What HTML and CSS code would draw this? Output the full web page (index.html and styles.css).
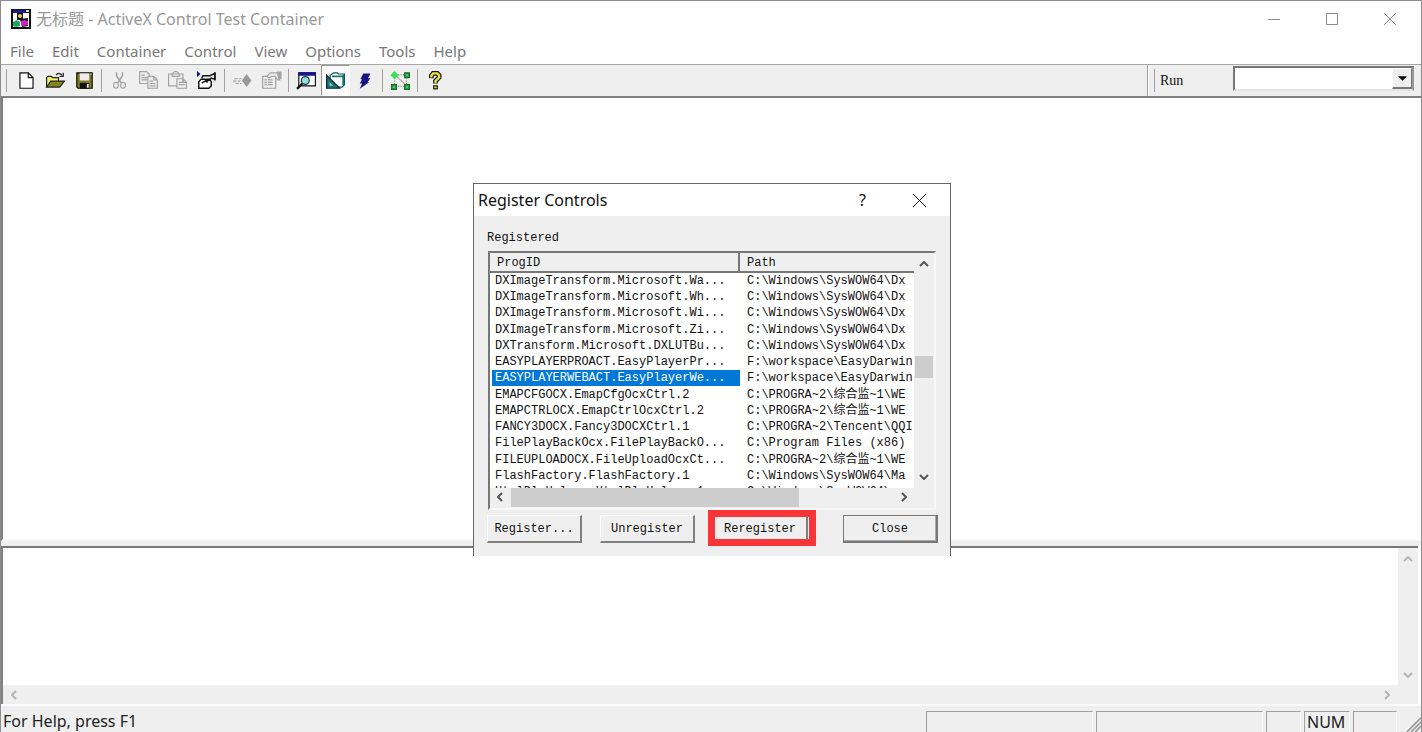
FILE: index.html
```html
<!DOCTYPE html>
<html lang="en">
<head>
<meta charset="utf-8">
<title>无标题 - ActiveX Control Test Container</title>
<link rel="stylesheet" href="styles.css">
</head>
<body>
<div class="window">
  <header class="titlebar">
    <svg class="app-icon" viewBox="0 0 20 20"><path fill="#111" d="M0 0h20v20H0z"/><path fill="#fff" d="M2 4h16v14H2z"/><path fill="#1c1c8c" d="M2 1h12v3H2z"/><path fill="#ddd" d="M15 1h3v2h-3z"/><path fill="#111" d="M6 4h6v7H6zM9 10l8-1v8l-6 1z"/><circle cx="9" cy="7" r="2" fill="#e3d64a"/><path fill="#19a866" d="M2 13l4-2 3 2v4l-4 1-3-1z"/><path fill="#d821c5" d="M10 12l3-1 4 1v4l-5 1-2-1z"/></svg>
    <h1 class="title">无标题 - ActiveX Control Test Container</h1>
    <div class="caption">
      <button class="cap" aria-label="Minimize"><svg viewBox="0 0 12 12"><path d="M0 6.500h12"/></svg></button>
      <button class="cap" aria-label="Maximize"><svg viewBox="0 0 12 12"><path d="M.5.5h11v11H.5z"/></svg></button>
      <button class="cap" aria-label="Close window"><svg viewBox="0 0 12 12"><path d="M0 0l12 12M12 0L0 12"/></svg></button>
    </div>
  </header>
  <nav class="menu">
    <button>File</button><button>Edit</button><button>Container</button><button>Control</button><button>View</button><button>Options</button><button>Tools</button><button>Help</button>
  </nav>
  <div class="toolbars">
    <div class="toolbar" role="toolbar">
      <span class="grip"></span>
      <button class="tool" aria-label="New"><svg viewBox="0 0 16 16"><path d="M2.500 1.500h7l4 4v9h-11z" fill="#fff" stroke="#111"/><path d="M9.500 1.500v4h4" fill="none" stroke="#111"/></svg></button>
      <button class="tool" aria-label="Open"><svg viewBox="0 0 16 16"><path d="M.5 13.500v-8l1-1h3l1 1h5v3" fill="#f5ef6a" stroke="#222"/><path d="M.5 13.500l3.500-5h11.500l-4 5z" fill="#85851c" stroke="#222"/><path d="M8.500 3.500q2-3 5 0M14.500 1.500v3h-3" fill="none" stroke="#222"/></svg></button>
      <button class="tool" aria-label="Save"><svg viewBox="0 0 16 16"><path d="M1.500 1.500h13v13h-12l-1-1z" fill="#7b7b1d" stroke="#111"/><path d="M4 2h8v6H4z" fill="#eee"/><path d="M4 10h8v5H4z" fill="#111"/><path d="M10 11h1.500v3H10zM13 2h1v1h-1z" fill="#eee"/></svg></button>
      <span class="sep"></span>
      <button class="tool" aria-label="Cut"><svg viewBox="0 0 16 16" fill="none" stroke="#a3a3a3"><path d="M5.500 1v3l4 6M10.500 1v3l-4 6" stroke-width="1.300"/><ellipse cx="5" cy="12" rx="2" ry="2.500"/><ellipse cx="11" cy="12" rx="2" ry="2.500"/></svg></button>
      <button class="tool" aria-label="Copy"><svg viewBox="0 0 16 16" fill="#eee" stroke="#a3a3a3"><path d="M.5.5h6l2 2v8h-8zM2 3.500h3M2 5.500h5M2 7.500h5"/><path d="M7.500 4.500h5l3 3v7h-8zM12.500 4.500v3h3M9 8.500h3M9 10.500h5M9 12.500h5"/></svg></button>
      <button class="tool" aria-label="Paste"><svg viewBox="0 0 16 16" fill="#eee" stroke="#a3a3a3"><path d="M.5 2.500h12v10H.5zM3.500 4.500v-2l2-2h2l2 2v2z"/><path d="M7.500 6.500h5l3 3v5h-8zM12.500 6.500v3h3M9 9.500h3M9 11.500h5"/></svg></button>
      <button class="tool" aria-label="Insert control"><svg viewBox="0 0 16 16"><path d="M0 0l3 2.500L0 5z" fill="#15158c"/><path d="M1.500 14.500V9l2-2h7l1.500 2v3.500l-2 2z" fill="#fff" stroke="#111" stroke-width="1.200"/><path d="M4 6l1-2h6l4-2v5l-3-1-2 2H7M4 10l3-1.500 2 1" fill="none" stroke="#111" stroke-width="1.200"/><path d="M14.500 1h1.200v7h-1.200z" fill="#111"/></svg></button>
      <span class="sep"></span>
      <button class="tool" aria-label="Invoke methods"><svg viewBox="0 0 16 16"><path d="M11.500 2.500l4 5.500-4 5.500L7.500 8z" fill="#999"/><path d="M1 6.500h6M0 8.500h6M2 10.500h5" stroke="#a3a3a3" stroke-dasharray="3 1"/></svg></button>
      <button class="tool" aria-label="Properties"><svg viewBox="0 0 16 16" fill="#eee" stroke="#a3a3a3"><path d="M.5 4.500h11v10H.5zM2 7.500h2M5 7.500h4M2 9.500h2M5 9.500h4M2 11.500h2M5 11.500h4"/><path d="M4 4.500l3-3h6l2 3v3h-2l-2-3H8l-2 1.500z"/><path d="M13 1h3v5h-2z" fill="#a3a3a3"/></svg></button>
      <span class="sep"></span>
      <button class="tool" aria-label="Object data"><svg viewBox="0 0 16 16"><path d="M1.500 1.500h14v11h-14z" fill="#fff" stroke="#111"/><path d="M1 1h15v3H1z" fill="#15158c"/><path d="M4.500 10.500L0 15" stroke="#111" stroke-width="2"/><circle cx="7" cy="8" r="3.300" fill="#8fe0e2" stroke="#233"/></svg></button>
      <button class="tool checked" aria-label="Design mode"><svg viewBox="0 0 16 16"><path d="M3.500 3.500l3-2h3l1 1h5v9l-2 2h-10z" fill="#fff" stroke="#155"/><path d="M5 4.500h9M14.500 3v9" stroke="#177" fill="none" stroke-width="1.500"/><path d="M.5 3.500v11h11z" fill="#1c7373" stroke="#123"/><path d="M3 9.500v3h3z" fill="#8bd2d0"/></svg></button>
      <button class="tool" aria-label="Freeze events"><svg viewBox="0 0 16 16"><path d="M7 2h6l-2 4h2l-2.500 3.500h1.500L4 15l2-4.500H4L6 7H4.500z" fill="#141482"/></svg></button>
      <span class="sep"></span>
      <button class="tool" aria-label="Windowless"><svg viewBox="0 0 16 16"><path d="M4 4l9 8" stroke="#c7aaa7"/><path d="M6 3h5M3 6v6M6 13h5M13 6v5" stroke="#78aa78" stroke-dasharray="1 1"/><path d="M3 0l3.500 3.500L3 7-.5 3.500z" fill="#34e454"/><path d="M11.500 1.500h4v4h-4zM.5 11.500h4v4h-4zM11.500 11.500h4v4h-4z" fill="#28a344" stroke="#176f2c"/><path d="M13 3h1v1h-1zM2 13h1v1H2zM13 13h1v1h-1z" fill="#a9e4b1"/></svg></button>
      <span class="sep"></span>
      <button class="tool" aria-label="Help"><svg viewBox="0 0 16 16" fill="none"><path d="M4.500 6V4l1.500-2h3.500L11 3.500v2L8 8.500v2" stroke="#111" stroke-width="4"/><path d="M6 12h4v3.500H6z" fill="#111"/><path d="M4.500 5.500V4l1.500-2h3.500L11 3.500v2L8 8.500v1.500" stroke="#ece33b" stroke-width="2"/><path d="M7 13h2v1.500H7z" fill="#ece33b"/></svg></button>
    </div>
    <div class="runbar">
      <span class="grip"></span>
      <label for="run">Run</label>
      <div class="combo"><select id="run"><option></option></select><span class="drop"><svg viewBox="0 0 10 5"><path d="M0 0h10L5 5z"/></svg></span></div>
    </div>
  </div>
  <main class="canvas"></main>
  <section class="log">
    <div class="log-text"></div>
    <div class="log-v"><svg class="chev" viewBox="0 0 10 6"><path d="M1 5l4-4 4 4"/></svg><svg class="chev" viewBox="0 0 10 6"><path d="M1 1l4 4 4-4"/></svg></div>
    <div class="log-h"><svg class="chev side" viewBox="0 0 6 10"><path d="M5 1L1 5l4 4"/></svg><svg class="chev side" viewBox="0 0 6 10"><path d="M1 1l4 4-4 4"/></svg></div>
    <div class="log-corner"></div>
  </section>
  <footer class="status">
    <span class="status-text">For Help, press F1</span>
    <span class="pane wide"></span><span class="pane wide"></span><span class="pane caps"></span><span class="pane num">NUM</span><span class="pane scrl"></span>
    <svg class="sizer" viewBox="0 0 18 18"><path d="M1 18L18 1M6 18L18 6M11 18l7-7" stroke="#999" stroke-width="2"/></svg>
  </footer>

  <div class="dialog" role="dialog" aria-labelledby="dlg">
    <header class="dialog-title">
      <h2 id="dlg">Register Controls</h2>
      <button class="dcap" aria-label="Context help">?</button>
      <button class="dcap" aria-label="Close dialog"><svg viewBox="0 0 13 13"><path d="M0 0l13 13M13 0L0 13"/></svg></button>
    </header>
    <div class="dialog-body">
      <div class="list-label">Registered</div>
      <div class="list">
        <div class="view">
          <table>
            <colgroup><col class="col-id"><col class="col-path"></colgroup>
            <thead><tr><th>ProgID</th><th>Path</th></tr></thead>
            <tbody>
              <tr><td>DXImageTransform.Microsoft.Wa...</td><td>C:\Windows\SysWOW64\Dx</td></tr>
              <tr><td>DXImageTransform.Microsoft.Wh...</td><td>C:\Windows\SysWOW64\Dx</td></tr>
              <tr><td>DXImageTransform.Microsoft.Wi...</td><td>C:\Windows\SysWOW64\Dx</td></tr>
              <tr><td>DXImageTransform.Microsoft.Zi...</td><td>C:\Windows\SysWOW64\Dx</td></tr>
              <tr><td>DXTransform.Microsoft.DXLUTBu...</td><td>C:\Windows\SysWOW64\Dx</td></tr>
              <tr><td>EASYPLAYERPROACT.EasyPlayerPr...</td><td>F:\workspace\EasyDarwin</td></tr>
              <tr class="selected"><td>EASYPLAYERWEBACT.EasyPlayerWe...</td><td>F:\workspace\EasyDarwin</td></tr>
              <tr><td>EMAPCFGOCX.EmapCfgOcxCtrl.2</td><td>C:\PROGRA~2\综合监~1\WE</td></tr>
              <tr><td>EMAPCTRLOCX.EmapCtrlOcxCtrl.2</td><td>C:\PROGRA~2\综合监~1\WE</td></tr>
              <tr><td>FANCY3DOCX.Fancy3DOCXCtrl.1</td><td>C:\PROGRA~2\Tencent\QQI</td></tr>
              <tr><td>FilePlayBackOcx.FilePlayBackO...</td><td>C:\Program Files (x86)</td></tr>
              <tr><td>FILEUPLOADOCX.FileUploadOcxCt...</td><td>C:\PROGRA~2\综合监~1\WE</td></tr>
              <tr><td>FlashFactory.FlashFactory.1</td><td>C:\Windows\SysWOW64\Ma</td></tr>
              <tr><td>HtmlDlgHelper.HtmlDlgHelper.1</td><td>C:\Windows\SysWOW64\ms</td></tr>
            </tbody>
          </table>
        </div>
        <div class="vbar"><svg class="chev" viewBox="0 0 10 6"><path d="M1 5l4-4 4 4"/></svg><span class="vtrack"><span class="vthumb"></span></span><svg class="chev" viewBox="0 0 10 6"><path d="M1 1l4 4 4-4"/></svg></div>
        <div class="hbar"><svg class="chev side" viewBox="0 0 6 10"><path d="M5 1L1 5l4 4"/></svg><span class="htrack"><span class="hthumb"></span></span><svg class="chev side" viewBox="0 0 6 10"><path d="M1 1l4 4-4 4"/></svg></div>
      </div>
      <div class="actions">
        <button class="btn">Register...</button>
        <button class="btn">Unregister</button>
        <button class="btn marked">Reregister</button>
        <button class="btn default">Close</button>
      </div>
    </div>
  </div>
</div>
</body>
</html>
```
FILE: styles.css
```css
* { box-sizing: border-box; }
body {
  margin: 0;
  font: 16px/20px "Noto Sans", "Noto Sans CJK SC", sans-serif;
  color: #222;
}
button { font: inherit; color: inherit; background: none; border: 0; padding: 0; margin: 0; }
svg { display: block; }
h1, h2 { margin: 0; font: inherit; }

.window {
  position: relative;
  display: flex;
  flex-direction: column;
  height: 100vh;
  overflow: hidden;
  background: #fff;
  border: solid #8c8c8c;
  border-width: 1px 1px 0 1px;
}

/* Title bar and menu */
.titlebar { display: flex; align-items: center; height: 36px; padding: 0 2px 0 10px; color: #999; }
.app-icon { width: 20px; height: 20px; margin-right: 5px; }
.title { flex: 1; font-size: 16px; }
.caption { display: flex; }
.cap { width: 58px; height: 36px; display: grid; place-items: center; }
.cap svg { width: 12px; height: 12px; fill: none; stroke: #8c8c8c; }
.menu { display: flex; gap: 18px; height: 27px; padding-left: 9px; color: #777; font-size: 15px; }

/* Toolbars */
.toolbars {
  display: flex;
  height: 34px;
  background: #efefef;
  border-top: 1px solid #a8a8a8;
  border-bottom: 2px solid #808080;
}
.toolbar { display: flex; flex: 1; align-items: stretch; border-right: 1px solid #a0a0a0; }
.grip { width: 2px; margin: 4px 5px 4px 4px; border-right: 1px solid #a0a0a0; }
.tool { width: 29px; display: grid; place-items: center; border: 1px solid transparent; }
.tool svg { width: 19px; height: 19px; overflow: visible; }
.tool.checked { background: #fafafa; border-color: #999 #fff #fff #999; }
.sep { width: 1px; margin: 4px 3px 4px 2px; background: #a3a3a3; }
.sep:nth-of-type(odd) { margin-left: 3px; }
.runbar {
  display: flex;
  align-items: center;
  width: 273px;
  padding-right: 7px;
  color: #111;
  border-left: 1px solid #fff;
}
.runbar .grip { align-self: stretch; }
.runbar label { flex: 1; font: 14px/20px "Liberation Serif", serif; }
.combo {
  display: flex;
  width: 181px;
  height: 25px;
  margin-bottom: 4px;
  background: #fff;
  border: 2px solid #777;
  border-right-color: #999;
  border-bottom-color: #e4e4e4;
}
.combo select { flex: 1; min-width: 0; appearance: none; border: 0; background: #fff; }
.drop {
  width: 20px;
  display: grid;
  place-items: center;
  background: #efefef;
  border: 1px solid #fff;
  border-right-color: #777;
  border-bottom: 2px solid #777;
}
.drop svg { width: 9px; height: 5px; }

/* Work areas */
.canvas {
  flex: 1;
  margin-right: 2px;
  background: #fff;
  border-left: 2px solid #808080;
  border-bottom: 2px solid #f7f7f7;
}
.log {
  display: grid;
  grid-template: 1fr 19px / 1fr 20px;
  height: 165px;
  padding-right: 3px;
  border-top: 5px solid #efefef;
  border-bottom: 2px solid #fafafa;
}
.log-text { border-top: 2px solid #777; border-left: 2px solid #808080; }
.log-v {
  display: flex;
  flex-direction: column;
  justify-content: space-between;
  align-items: center;
  padding: 8px 0 7px;
  background: #efefef;
  border-top: 2px solid #777;
}
.log-h {
  display: flex;
  justify-content: space-between;
  align-items: center;
  padding: 0 8px;
  background: #efefef;
  border-left: 2px solid #808080;
}
.log-corner { background: #efefef; }
.chev { width: 10px; height: 6px; fill: none; stroke: #b5b5b5; stroke-width: 2; }
.chev.side { width: 6px; height: 10px; }

/* Status bar */
.status { position: relative; display: flex; gap: 3px; height: 26px; padding: 5px 24px 0 2px; background: #efefef; }
.status-text { flex: 1; line-height: 20px; }
.pane { border: solid #a0a0a0; border-width: 1px 0 0 1px; border-right: 1px solid #f8f8f8; line-height: 20px; padding-left: 2px; }
.wide { width: 167px; }
.caps { width: 35px; }
.num { width: 46px; }
.scrl { width: 44px; }
.sizer { position: absolute; right: 0; bottom: 0; width: 15px; height: 15px; }

/* Dialog */
.dialog {
  position: absolute;
  left: 472px;
  top: 182px;
  width: 478px;
  background: #efefef;
  border: solid #666;
  border-width: 1px 1px 0 1px;
  color: #111;
}
.dialog-title { display: flex; align-items: center; height: 32px; padding: 0 2px 0 4px; background: #fff; }
.dialog-title h2 { flex: 1; }
.dcap { width: 57px; height: 32px; display: grid; place-items: center; }
.dcap svg { width: 13px; height: 13px; fill: none; stroke: #111; }
.dialog-body { padding: 12px 12px 13px 13px; font: 12px/16px "Liberation Mono", "Noto Sans CJK SC", monospace; }
.list-label { height: 23px; line-height: 20px; }
.list {
  display: grid;
  grid-template: 235px 20px / 1fr 20px;
  width: 448px;
  margin-left: 1px;
  border: 2px solid #777;
  border-right-color: #f8f8f8;
  border-bottom-color: #f8f8f8;
}
.view { overflow: hidden; background: #fff; }
table { width: 100%; table-layout: fixed; border-collapse: separate; border-spacing: 0; }
.col-id { width: 250px; }
th {
  height: 20px;
  padding: 1px 7px 0;
  font-weight: 400;
  text-align: left;
  background: #efefef;
  border-right: 2px solid #777;
  border-bottom: 2px solid #777;
}
th:last-child { border-right: 0; }
td { height: 16px; padding: 0 0 0 5px; white-space: nowrap; overflow: hidden; }
tr:nth-child(4n) td { height: 17px; }
td + td { padding-left: 7px; }
.selected td:first-child { color: #fff; background: linear-gradient(to right, #fff 2px, #0078d7 2px); }
.vbar { display: flex; flex-direction: column; align-items: center; padding: 8px 0; }
.vbar .chev, .hbar .chev { stroke: #555; }
.vtrack { flex: 1; width: 18px; padding-top: 89px; }
.vthumb { display: block; height: 22px; background: #cdcdcd; }
.hbar { display: flex; align-items: flex-start; padding: 0 7px; }
.hbar .chev { margin-top: 4px; }
.htrack { flex: 1; height: 19px; padding: 0 102px 0 8px; }
.hthumb { display: block; height: 19px; background: #cdcdcd; }
.actions { display: flex; gap: 18px; padding-top: 5px; }
.btn {
  position: relative;
  width: 95px;
  height: 28px;
  color: #111;
  border: solid;
  border-width: 1px 2px 2px 1px;
  border-color: #fff #808080 #808080 #fff;
}
.btn.default { margin-left: auto; border: 2px solid #777; border-width: 1px 2px 2px 1px; box-shadow: inset -1px -1px #aaa; }
.marked::after { content: ""; position: absolute; inset: -6px -10px -5px -6px; border: 7px solid #f93439; }
```
